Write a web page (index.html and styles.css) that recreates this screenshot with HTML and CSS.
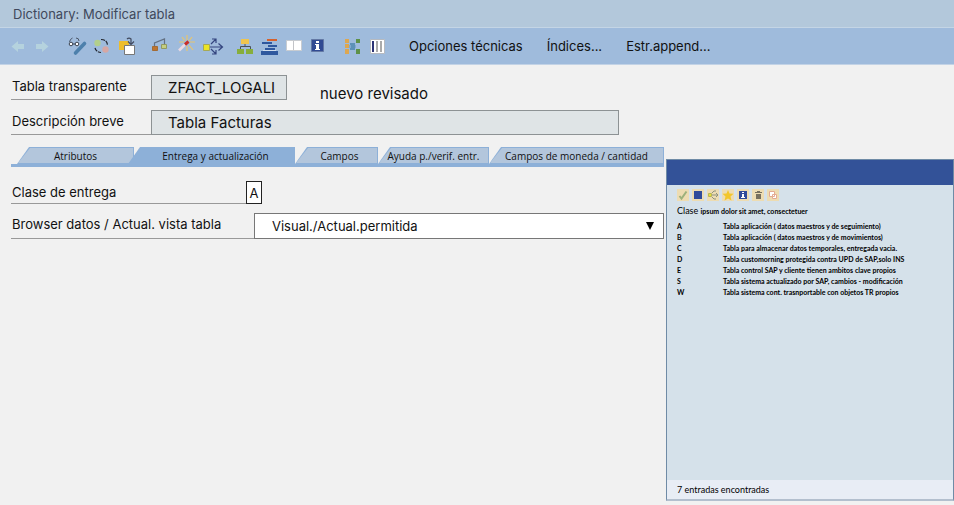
FILE: index.html
```html
<!DOCTYPE html>
<html lang="es">
<head>
<meta charset="utf-8">
<meta name="viewport" content="width=device-width, initial-scale=1">
<title>Dictionary: Modificar tabla</title>
<link rel="stylesheet" href="styles.css">
</head>
<body>
<header>
  <h1 class="title">Dictionary: Modificar tabla</h1>
  <nav class="toolbar" aria-label="Herramientas">
    <div class="group">
      <button class="tool" type="button" aria-label="Atrás"><svg viewBox="0 0 24 24"><path d="M5.500 12.500l6.500-5.500v3h6v5h-6v3z" fill="#b5d2de"/></svg></button>
      <button class="tool" type="button" aria-label="Adelante"><svg viewBox="0 0 24 24"><path d="M18.500 12.500L12 7v3H6v5h6v3z" fill="#b5d2de"/></svg></button>
    </div>
    <div class="group group-wide group-gap">
      <button class="tool" type="button" aria-label="Visualizar o modificar"><svg viewBox="0 0 24 24" fill="none"><path d="M19.500 9.500L10.500 19" stroke="#4d80ac" stroke-width="3.600" stroke-linecap="round"/><path d="M4.500 8q.5-3 3-4M14 7q0-3-3-3" stroke="#4b5668"/><circle cx="6" cy="10" r="1.800" fill="#fff" stroke="#3c4350"/><circle cx="12" cy="10" r="1.800" fill="#fff" stroke="#3c4350"/><path d="M8 10h2" stroke="#3c4350"/></svg></button>
      <button class="tool" type="button" aria-label="Activo o inactivo"><svg viewBox="0 0 24 24" fill="none"><circle cx="7.500" cy="9" r="3.200" fill="#b2cf8c"/><circle cx="15.500" cy="15.500" r="3.200" fill="#d6a7a4"/><path d="M11 5.500q6 0 6.500 5.500M5 14q1 4 6 4.500" stroke="#20242c" stroke-width="1.200" stroke-dasharray="4 1"/></svg></button>
      <button class="tool" type="button" aria-label="Otro objeto"><svg viewBox="0 0 24 24" fill="none"><path d="M4 7h10v9H4z" fill="#edbd2c"/><path d="M9.500 11.500h10v9h-10z" fill="#fff" stroke="#777"/><path d="M12 5q2-2 4 0v5M13 7.500l3 3 3-3" stroke="#414a60" stroke-width="1.200"/></svg></button>
    </div>
    <div class="group group-wider">
      <button class="tool" type="button" aria-label="Verificar"><svg viewBox="0 0 24 24" fill="none"><path d="M7.500 12V9l10-4v5" stroke="#637184" stroke-width="1.200"/><path d="M5.500 12.500h5v4h-5z" fill="#bd742f" stroke="#a36b35"/><path d="M14.500 10.500h5v4h-5z" fill="#c4ce81" stroke="#92995f"/></svg></button>
      <button class="tool" type="button" aria-label="Activar"><svg viewBox="0 0 24 24" fill="none"><path d="M13 1v5M8 3l3 4M18 3l-3 4M16 8h5M15 11l4 5M13 12v5M5 8h5" stroke="#e8c56e" stroke-width="1.200"/><path d="M11 10.500l-6 6" stroke="#ead9e2" stroke-width="2.600"/><path d="M14.500 7.500L11 10.500" stroke="#c92e28" stroke-width="3"/></svg></button>
      <button class="tool" type="button" aria-label="Lista de utilización"><svg viewBox="0 0 24 24" fill="none"><path d="M9 13h12M17.500 9.500l4 3.500-4 3.500M10 10l5-5M11 5h4v4M10 15l5 5M11 20h4v-4" stroke="#34457f" stroke-width="1.200"/><path d="M2.500 10.500h6v6h-6z" fill="#ece525" stroke="#a6a956"/></svg></button>
    </div>
    <div class="group">
      <button class="tool" type="button" aria-label="Jerarquía"><svg viewBox="0 0 24 24" fill="none"><path d="M8 5h8v5H8z" fill="#efc550"/><path d="M12 10v2.500M7.500 15v-2.500h10V15" stroke="#4b5058"/><path d="M4 15h7v5H4zM13 15h7v5h-7z" fill="#87ae3c"/></svg></button>
      <button class="tool" type="button" aria-label="Lista de objetos"><svg viewBox="0 0 24 24"><path d="M10 5h10v2H10z" fill="#d5612d"/><path d="M5 8h10v2H5zM11 11h9v2h-9zM8 14h10v2H8zM4 17h17v4H4z" fill="#2f589e"/><path d="M6 16h13v1H6z" fill="#d2deed"/></svg></button>
      <button class="tool" type="button" aria-label="Ventana"><svg viewBox="0 0 24 24"><path d="M5.500 6.500h15v10h-15z" fill="#fff" stroke="#c8ccd1"/><path d="M12.500 7v9" stroke="#c2c4c8"/></svg></button>
      <button class="tool" type="button" aria-label="Información"><svg viewBox="0 0 24 24"><path d="M6.500 5.500h12v12h-12z" fill="#304a93" stroke="#6378a4"/><path d="M11 7h3v2h-3zM10 10h4v5h1v1h-5v-1h1v-4h-1z" fill="#fff"/></svg></button>
    </div>
    <div class="group group-wide group-gap">
      <button class="tool" type="button" aria-label="Campos relacionados"><svg viewBox="0 0 24 24"><path d="M5 5h4v4H5zM5 10h4v4H5zM5 15h4v5H5z" fill="#dda751"/><path d="M10 9h5v7h-5z" fill="#5e91b7"/><path d="M9 11h7v3H9z" fill="#80a9cc"/><path d="M11 9h4v7h-4z" fill="#5e91b7"/><path d="M16 5h4v4h-4zM16 15h4v5h-4z" fill="#5e9148"/></svg></button>
      <button class="tool" type="button" aria-label="Contenido"><svg viewBox="0 0 24 24"><path d="M5.500 5.500h14v14h-14z" fill="#fff" stroke="#b6bac0"/><path d="M7 7h2v11H7z" fill="#2c3475"/><path d="M11 7h2v11h-2zM15 7h2v11h-2z" fill="#aaa"/></svg></button>
    </div>
    <div class="commands">
      <button class="command" type="button">Opciones técnicas</button>
      <button class="command" type="button">Índices...</button>
      <button class="command" type="button">Estr.append...</button>
    </div>
  </nav>
</header>

<main>
  <div class="row row-table">
    <label class="caption" for="tabla">Tabla transparente</label>
    <input class="box box-short" id="tabla" value="ZFACT_LOGALI" readonly>
    <span class="status">nuevo revisado</span>
  </div>
  <div class="row">
    <label class="caption" for="desc">Descripción breve</label>
    <input class="box box-long" id="desc" value="Tabla Facturas" readonly>
  </div>

  <div class="tabs" role="tablist">
    <button class="tab tab-first" type="button" role="tab"><span>Atributos</span></button>
    <button class="tab tab-active" type="button" role="tab" aria-selected="true"><span>Entrega y actualización</span></button>
    <button class="tab tab-fields" type="button" role="tab"><span>Campos</span></button>
    <button class="tab tab-help" type="button" role="tab"><span>Ayuda p./verif. entr.</span></button>
    <button class="tab tab-money" type="button" role="tab"><span>Campos de moneda / cantidad</span></button>
  </div>

  <div class="row row-class">
    <label class="caption caption-class" for="clase">Clase de entrega</label>
    <input class="code" id="clase" value="A">
  </div>
  <div class="row row-browser">
    <label class="caption caption-browser" for="vista">Browser datos / Actual. vista tabla</label>
    <div class="select">
      <select id="vista"><option>Visual./Actual.permitida</option></select>
      <svg class="arrow" viewBox="0 0 8 8"><path d="M0 0h8L4 8z"/></svg>
    </div>
  </div>
</main>

<aside class="popup" aria-label="Clase de entrega">
  <div class="popup-bar"></div>
  <div class="popup-body">
    <div class="minis">
      <button class="mini" type="button" aria-label="Aceptar"><svg viewBox="0 0 12 12" fill="none"><path d="M2.500 7l2 2.500 5-7" stroke="#9db17c" stroke-width="2"/></svg></button>
      <button class="mini" type="button" aria-label="Detener"><svg viewBox="0 0 12 12"><path d="M2 2h8v8H2z" fill="#304b9b"/></svg></button>
      <button class="mini" type="button" aria-label="Relaciones"><svg viewBox="0 0 12 12" fill="none"><path d="M5 6h6M9 4l2 2-2 2M5 4l2-2h2M5 8l2 2h2" stroke="#8d927e"/><path d="M1.500 4.500h3v3h-3z" fill="#e8e332" stroke="#b7b35c"/></svg></button>
      <button class="mini" type="button" aria-label="Favoritos"><svg viewBox="0 0 12 12"><path d="M6 1l1.500 3.500 4 .3-3 2.700 1 4L6 9.500l-3.500 2 1-4-3-2.700 4-.3z" fill="#f2c62d"/></svg></button>
      <button class="mini" type="button" aria-label="Información"><svg viewBox="0 0 12 12"><path d="M2 2h8v8H2z" fill="#304b9b"/><path d="M5 3h2v1H5zM5 5h2v3h1v1H4V8h1z" fill="#fff"/></svg></button>
      <button class="mini" type="button" aria-label="Borrar"><svg viewBox="0 0 12 12"><path d="M5 2h3v1h2v1H3V3h2zM4 5h5v5H4z" fill="#77705e"/></svg></button>
      <button class="mini" type="button" aria-label="Copiar"><svg viewBox="0 0 12 12" fill="#fff" stroke="#e4ab91"><path d="M2.500 2.500h5v5h-5zM5.500 5.500h4v4h-4z"/></svg></button>
    </div>
    <p class="lead">Clase <b>ipsum dolor sit amet, consectetuer</b></p>
    <table class="values">
      <tbody>
        <tr><th scope="row">A</th><td>Tabla aplicación ( datos maestros y de seguimiento)</td></tr>
        <tr><th scope="row">B</th><td>Tabla aplicación ( datos maestros y de movimientos)</td></tr>
        <tr><th scope="row">C</th><td>Tabla para almacenar datos temporales, entregada vacia.</td></tr>
        <tr><th scope="row">D</th><td>Tabla customorning protegida contra UPD de SAP,solo INS</td></tr>
        <tr><th scope="row">E</th><td>Tabla control SAP y cliente tienen ambitos clave propios</td></tr>
        <tr><th scope="row">S</th><td>Tabla sistema actualizado por SAP, cambios - modificación</td></tr>
        <tr><th scope="row">W</th><td>Tabla sistema cont. trasnportable con objetos TR propios</td></tr>
      </tbody>
    </table>
  </div>
  <footer class="popup-foot">7 entradas encontradas</footer>
</aside>
</body>
</html>
```

FILE: styles.css
```css
* { box-sizing: border-box; }

body {
  margin: 0;
  min-height: 100vh;
  position: relative;
  background: #f1f1f1;
  color: #111;
  font: 13px/16px Inter, "Liberation Sans", sans-serif;
}

button, input, select { font: inherit; color: inherit; margin: 0; border-radius: 0; }
button { border: 0; padding: 0; background: none; }

.title {
  margin: 0;
  padding: 6px 13px 5px;
  border-bottom: 1px solid #c4d5e5;
  background: #b3c8db;
  color: #40485c;
  font-size: 13px;
  font-weight: 400;
  line-height: 16px;
}

.toolbar {
  display: flex;
  align-items: center;
  gap: 8px;
  height: 37px;
  padding-left: 6px;
  border-bottom: 1px solid #c3d3e6;
  background: #9fbbdc;
}

.group { display: flex; }
.group-wide { gap: 1px; }
.group-wider { gap: 3px; }
.group-gap { margin-left: 3px; }
.tool { width: 24px; height: 24px; }
.tool svg { display: block; width: 24px; height: 24px; }

.commands { display: flex; gap: 24px; margin-left: 12px; }

main { padding: 10px 290px 24px 11px; }

.row { display: flex; align-items: stretch; }
.row-table { margin-bottom: 10px; }

.caption {
  flex: none;
  width: 140px;
  padding: 3px 0 0 1px;
  border-bottom: 1px solid #999;
}

.box {
  height: 25px;
  padding: 0 16px;
  border: 1px solid #8d9294;
  background: #dfe4e6;
  font-size: 15px;
}
.box-short { width: 136px; padding-right: 4px; }
.box-long { width: 468px; }
.status { margin: 10px 0 0 33px; font-size: 15px; line-height: 18px; white-space: nowrap; height: 15px; }

.tabs {
  display: flex;
  margin-top: 12px;
  padding-left: 6px;
  border-bottom: 3px solid #8db0d8;
  font: 10px/14px "Open Sans", "Noto Sans", sans-serif;
}

.tab {
  position: relative;
  height: 17px;
  background: #8db0d8;
  clip-path: polygon(12px 0, 100% 0, 100% 100%, 0 100%);
  white-space: nowrap;
}
.tab::before {
  content: "";
  position: absolute;
  inset: 1px;
  background: #b3c6dc;
  clip-path: polygon(12px 0, 100% 0, 100% 100%, 0 100%);
}
.tab span { position: relative; }
.tab-first { width: 117px; }
.tab-active { width: 167px; margin-left: -6px; padding-left: 8px; }
.tab-active::before { background: #8db0d8; }
.tab-fields { width: 83px; padding-left: 6px; }
.tab-help { width: 111px; }
.tab-money { flex: 1; }

.row-class { margin-top: 14px; }
.caption-class { width: 235px; }
.code {
  width: 16px;
  height: 23px;
  padding: 0;
  border: 1px solid #222;
  background: #fff;
  text-align: center;
}

.row-browser { margin-top: 9px; }
.caption-browser { width: 243px; }
.select { position: relative; flex: 1; }
.select select {
  display: block;
  width: 100%;
  height: 26px;
  padding: 0 24px 1px 17px;
  border: 1px solid #777;
  background: #fff;
  appearance: none;
}
.arrow {
  position: absolute;
  top: 9px;
  right: 10px;
  width: 8px;
  height: 8px;
  pointer-events: none;
}

.popup {
  position: absolute;
  top: 159px;
  right: 0;
  bottom: 4px;
  width: 288px;
  display: flex;
  flex-direction: column;
  border: 1px solid #6f8ba6;
  border-bottom: 2px solid #b3bfce;
  background: #d5e1ea;
  font: 9px/11px Lato, "Noto Sans", sans-serif;
  color: #000;
}
.popup-bar { height: 25px; background: #335298; }
.popup-body { flex: 1; padding: 4px 10px; }
.minis { display: flex; gap: 3px; }
.mini { width: 12px; height: 12px; background: #eddcb2; }
.mini svg { display: block; width: 12px; height: 12px; }

.lead { margin: 4px 0; }
.lead b { font-size: 7px; font-weight: 700; }
.values { border-collapse: collapse; font-size: 7px; line-height: 11px; font-weight: 700; }
.values th { width: 46px; padding: 0; text-align: left; font-weight: 700; }
.values td { padding: 0; white-space: nowrap; }
.popup-foot { padding: 4px 10px; background: #e8edf5; }
```
